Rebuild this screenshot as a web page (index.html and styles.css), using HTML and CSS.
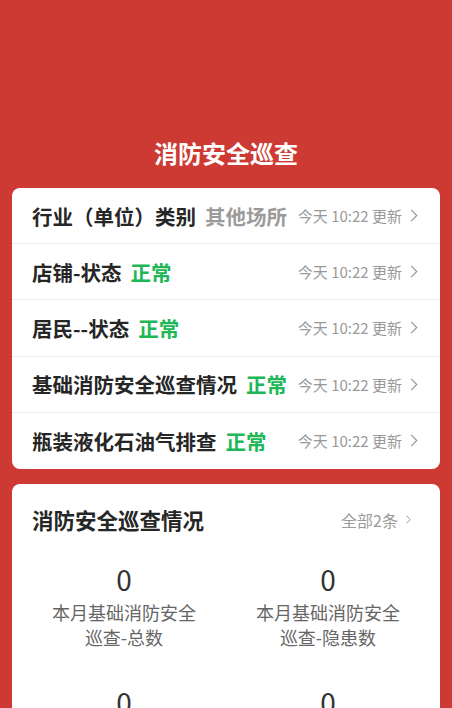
FILE: index.html
```html
<!DOCTYPE html>
<html lang="zh-CN">
<head>
<meta charset="utf-8">
<title>消防安全巡查</title>
<link rel="stylesheet" href="styles.css">
</head>
<body>
<div class="page">
  <h1 class="title">消防安全巡查</h1>

  <div class="card list">
    <div class="row">
      <span class="label">行业（单位）类别</span>
      <span class="value gray">其他场所</span>
      <span class="time">今天 10:22 更新</span>
      <svg class="chev" viewBox="0 0 8 14" width="8" height="14"><path d="M1 1 L7 7 L1 13" fill="none" stroke="#9a9a9a" stroke-width="1.3"/></svg>
    </div>
    <div class="row">
      <span class="label">店铺-状态</span>
      <span class="value green">正常</span>
      <span class="time">今天 10:22 更新</span>
      <svg class="chev" viewBox="0 0 8 14" width="8" height="14"><path d="M1 1 L7 7 L1 13" fill="none" stroke="#9a9a9a" stroke-width="1.3"/></svg>
    </div>
    <div class="row">
      <span class="label">居民--状态</span>
      <span class="value green">正常</span>
      <span class="time">今天 10:22 更新</span>
      <svg class="chev" viewBox="0 0 8 14" width="8" height="14"><path d="M1 1 L7 7 L1 13" fill="none" stroke="#9a9a9a" stroke-width="1.3"/></svg>
    </div>
    <div class="row">
      <span class="label">基础消防安全巡查情况</span>
      <span class="value green">正常</span>
      <span class="time">今天 10:22 更新</span>
      <svg class="chev" viewBox="0 0 8 14" width="8" height="14"><path d="M1 1 L7 7 L1 13" fill="none" stroke="#9a9a9a" stroke-width="1.3"/></svg>
    </div>
    <div class="row">
      <span class="label">瓶装液化石油气排查</span>
      <span class="value green">正常</span>
      <span class="time">今天 10:22 更新</span>
      <svg class="chev" viewBox="0 0 8 14" width="8" height="14"><path d="M1 1 L7 7 L1 13" fill="none" stroke="#9a9a9a" stroke-width="1.3"/></svg>
    </div>
  </div>

  <div class="card stats">
    <div class="stats-head">
      <span class="stats-title">消防安全巡查情况</span>
      <span class="more">全部2条
        <svg class="chev-s" viewBox="0 0 5 9" width="5" height="9"><path d="M0.7 0.7 L4.2 4.5 L0.7 8.3" fill="none" stroke="#9a9a9a" stroke-width="1"/></svg>
      </span>
    </div>
    <div class="grid">
      <div class="stat">
        <div class="num">0</div>
        <div class="desc">本月基础消防安全<br>巡查-总数</div>
      </div>
      <div class="stat">
        <div class="num">0</div>
        <div class="desc">本月基础消防安全<br>巡查-隐患数</div>
      </div>
      <div class="stat">
        <div class="num">0</div>
        <div class="desc">本月瓶装液化石油气<br>排查-总数</div>
      </div>
      <div class="stat">
        <div class="num">0</div>
        <div class="desc">本月瓶装液化石油气<br>排查-隐患数</div>
      </div>
    </div>
  </div>
</div>
</body>
</html>
```

FILE: styles.css
```css
* { box-sizing: border-box; }
html, body {
  margin: 0;
  padding: 0;
  background: #cd3a34;
}
body {
  font-family: "Noto Sans CJK SC", "Noto Sans", sans-serif;
  color: #262626;
}
.page {
  padding: 0 12px;
}
.title {
  margin: 0;
  padding-top: 136px;
  padding-bottom: 18px;
  height: 188px;
  line-height: 34px;
  font-size: 24px;
  font-weight: 700;
  color: #ffffff;
  text-align: center;
}
.card {
  background: #ffffff;
  border-radius: 8px;
}
.list {
  overflow: hidden;
}
.row {
  display: flex;
  align-items: center;
  height: 56.2px;
  padding: 0 22px 0 20px;
  border-bottom: 1px solid #eeeeee;
}
.row:last-child {
  border-bottom: none;
}
.label {
  font-size: 20.5px;
  font-weight: 700;
  color: #262626;
  white-space: nowrap;
}
.value {
  margin-left: 9px;
  font-size: 20.5px;
  font-weight: 700;
  white-space: nowrap;
}
.green { color: #20b757; }
.gray { color: #9b9b9b; }
.time {
  margin-left: auto;
  font-size: 15px;
  color: #999999;
  white-space: nowrap;
}
.chev {
  margin-left: 8px;
  width: 8px;
  height: 13px;
  flex: none;
}
.stats {
  margin-top: 15px;
  padding: 0 10px 40px;
}
.stats-head {
  display: flex;
  align-items: center;
  justify-content: space-between;
  height: 72px;
  padding: 0 19px 0 10px;
}
.stats-title {
  font-size: 21.5px;
  font-weight: 700;
  color: #262626;
}
.more {
  display: flex;
  align-items: center;
  font-size: 16px;
  color: #9a9a9a;
}
.chev-s {
  margin-left: 8px;
}
.grid {
  display: grid;
  grid-template-columns: 1fr 1fr;
  row-gap: 34px;
  padding-top: 5px;
}
.stat {
  text-align: center;
}
.num {
  font-size: 28px;
  line-height: 36px;
  color: #333333;
}
.desc {
  margin-top: 3px;
  font-size: 18px;
  line-height: 25px;
  color: #666666;
}
```
